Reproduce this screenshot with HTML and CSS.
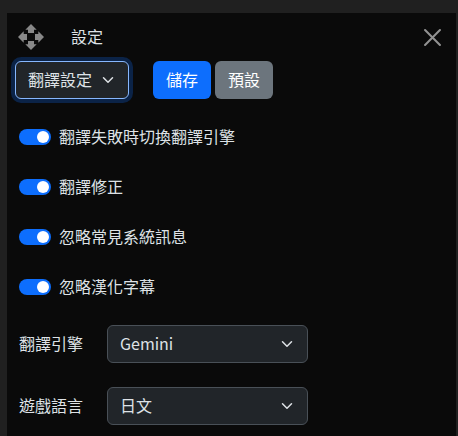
FILE: index.html
```html
<!DOCTYPE html>
<html lang="zh-Hant">
<head>
<meta charset="utf-8">
<title>設定</title>
<link rel="stylesheet" href="styles.css">
</head>
<body>
<main class="panel">
  <header class="titlebar">
    <svg class="move" viewBox="0 0 26 26"><path d="M13 0l5.7 5.7h-2.7v3.3h-6V5.7H7.3zM13 26l5.7-5.7h-2.7V17h-6v3.3H7.3zM0 13l5.7-5.7V10H9v6H5.7v2.7zM26 13l-5.7-5.7V10H17v6h3.3v2.7z"/></svg>
    <h1 class="title text">設定</h1>
    <svg class="close" viewBox="0 0 16 16"><path d="M1 1l14 14M15 1L1 15"/></svg>
  </header>
  <div class="toolbar">
    <div class="select page focused"><span class="text">翻譯設定</span><svg class="chevron" viewBox="0 0 16 16"><path d="m2 5 6 6 6-6"/></svg></div>
    <button class="btn primary">儲存</button>
    <button class="btn secondary">預設</button>
  </div>
  <div class="switches">
    <div class="row"><span class="switch"></span><span class="text">翻譯失敗時切換翻譯引擎</span></div>
    <div class="row"><span class="switch"></span><span class="text">翻譯修正</span></div>
    <div class="row"><span class="switch"></span><span class="text">忽略常見系統訊息</span></div>
    <div class="row"><span class="switch"></span><span class="text">忽略漢化字幕</span></div>
  </div>
  <div class="fields">
    <div class="field"><span class="label text">翻譯引擎</span><div class="select"><span class="text">Gemini</span><svg class="chevron" viewBox="0 0 16 16"><path d="m2 5 6 6 6-6"/></svg></div></div>
    <div class="field"><span class="label text">遊戲語言</span><div class="select"><span class="text">日文</span><svg class="chevron" viewBox="0 0 16 16"><path d="m2 5 6 6 6-6"/></svg></div></div>
  </div>
</main>
</body>
</html>
```
FILE: styles.css
```css
* { box-sizing: border-box; }
body {
  margin: 0;
  height: 436px;
  padding: 13px 2px 0 7px;
  overflow: hidden;
  background: #202020;
  color: #dee2e6;
  font: 16px/24px "Noto Sans CJK TC", sans-serif;
}
.panel { height: 423px; background: #0a0a0a; }
.text { padding-bottom: 2px; }
.titlebar { display: flex; align-items: center; height: 48px; padding: 0 15px 0 11px; }
.move { width: 26px; height: 26px; fill: #888; }
.title { margin: 0 0 0 27px; font-size: 16px; font-weight: 400; line-height: 24px; }
.close { width: 17px; height: 17px; margin-left: auto; fill: none; stroke: #929292; stroke-width: 1.9; stroke-linecap: round; }
.toolbar { display: flex; padding-left: 8px; }
.select {
  display: flex;
  align-items: center;
  justify-content: space-between;
  width: 201px;
  height: 38px;
  padding: 0 14px 0 12px;
  border: 1px solid #495057;
  border-radius: 6px;
  background: #212529;
}
.select.page { width: 114px; margin-right: 24px; }
.focused { border-color: #86b7fe; box-shadow: 0 0 0 4px #0b2347; }
.chevron { width: 12px; height: 12px; fill: none; stroke: #dee2e6; stroke-width: 2; stroke-linecap: round; stroke-linejoin: round; }
.btn {
  width: 58px;
  height: 38px;
  margin: 0 4px 0 0;
  padding: 0 0 2px;
  border: 0;
  border-radius: 6px;
  color: #fff;
  font: inherit;
}
.primary { background: #0d6efd; }
.secondary { background: #6c757d; }
.switches { display: grid; gap: 26px; padding: 26px 0 0 12px; }
.row { display: flex; align-items: center; height: 24px; gap: 8px; }
.switch { display: flex; align-items: center; justify-content: flex-end; width: 32px; height: 16px; padding-right: 2px; border-radius: 8px; background: #0d6efd; }
.switch::after { content: ""; width: 12px; height: 12px; border-radius: 50%; background: #fff; }
.fields { display: grid; gap: 24px; padding: 26px 0 0 12px; }
.field { display: flex; align-items: center; }
.label { width: 88px; }
```
